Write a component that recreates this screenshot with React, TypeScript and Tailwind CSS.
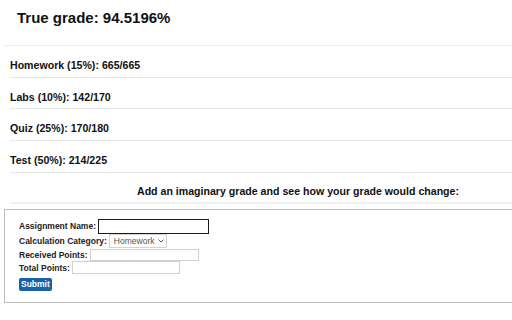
import React, { useState } from 'react';

interface Category {
  name: string;
  weight: number;
  earned: number;
  total: number;
}

const categories: Category[] = [
  { name: 'Homework', weight: 15, earned: 665, total: 665 },
  { name: 'Labs', weight: 10, earned: 142, total: 170 },
  { name: 'Quiz', weight: 25, earned: 170, total: 180 },
  { name: 'Test', weight: 50, earned: 214, total: 225 },
];

export default function App() {
  const [assignment, setAssignment] = useState('');
  const [category, setCategory] = useState('Homework');
  const [received, setReceived] = useState('');
  const [total, setTotal] = useState('');

  return (
    <div
      className="w-full h-[320px] overflow-hidden bg-white text-[#111]"
      style={{ fontFamily: '"Liberation Sans", Arial, sans-serif' }}
    >
      <div className="w-[600px] pl-[4px]">
        {/* Header */}
        <div className="h-[45px] pl-[13px] pt-[9px]">
          <h1 className="text-[15px] leading-[18px] font-bold">True grade: 94.5196%</h1>
        </div>

        {/* Category rows */}
        <div className="border-t border-[#ececec]">
          {categories.map((c) => (
            <div key={c.name} className="ml-[6px] h-[31.7px] box-border border-b-[1.5px] border-[#e6e6e6] flex items-center pt-[7px]">
              <span className="text-[10.6px] leading-[12px] font-bold">
                {c.name} ({c.weight}%): {c.earned}/{c.total}
              </span>
            </div>
          ))}
          <div className="ml-[6px] h-[31px] box-border border-b-2 border-[#f2f2f2] flex items-center justify-center pt-[7px] pr-[14px]">
            <span className="text-[10.6px] leading-[12px] font-bold">
              Add an imaginary grade and see how your grade would change:
            </span>
          </div>
        </div>

        {/* Form */}
        <form
          className="mt-[5.5px] h-[94px] box-border border-[1.5px] border-[#bdbdbd] pl-[14px] pt-[8.5px] text-[8.5px] leading-[10px] font-bold text-[#222]"
          onSubmit={(e) => e.preventDefault()}
        >
          <div className="flex items-center h-[15px]">
            <label className="mr-[2px]">Assignment Name:</label>
            <input
              value={assignment}
              onChange={(e) => setAssignment(e.target.value)}
              className="w-[111px] h-[14.5px] box-border border-[1.5px] border-[#1a1a1a] bg-white outline-none"
            />
          </div>
          <div className="flex items-center h-[15px]">
            <label className="mr-[2px]">Calculation Category:</label>
            <div className="relative w-[58px] h-[14px] box-border border border-[#d4d4d4] bg-white flex items-center pl-[4px] font-normal text-[#555]">
              <select
                value={category}
                onChange={(e) => setCategory(e.target.value)}
                className="absolute inset-0 opacity-0"
              >
                <option>Homework</option>
                <option>Labs</option>
                <option>Quiz</option>
                <option>Test</option>
              </select>
              <span className="text-[8.5px]">{category}</span>
              <svg className="ml-[4px]" width="6" height="4" viewBox="0 0 6 4" fill="none">
                <path d="M0.6 0.6 L3 3 L5.4 0.6" stroke="#444" strokeWidth="0.9" />
              </svg>
            </div>
          </div>
          <div className="flex items-center h-[12.5px]">
            <label className="mr-[2px]">Received Points:</label>
            <input
              value={received}
              onChange={(e) => setReceived(e.target.value)}
              className="w-[109px] h-[12.5px] box-border border border-[#d0d0d0] bg-white outline-none"
            />
          </div>
          <div className="flex items-center h-[12.5px]">
            <label className="mr-[2px]">Total Points:</label>
            <input
              value={total}
              onChange={(e) => setTotal(e.target.value)}
              className="w-[108px] h-[12.5px] box-border border border-[#d0d0d0] bg-white outline-none"
            />
          </div>
          <button
            type="submit"
            className="mt-[4px] h-[13px] px-[2px] rounded-[2px] bg-[#1462a8] text-white text-[8.5px] leading-[13px] font-bold"
          >
            Submit
          </button>
        </form>
      </div>
    </div>
  );
}
